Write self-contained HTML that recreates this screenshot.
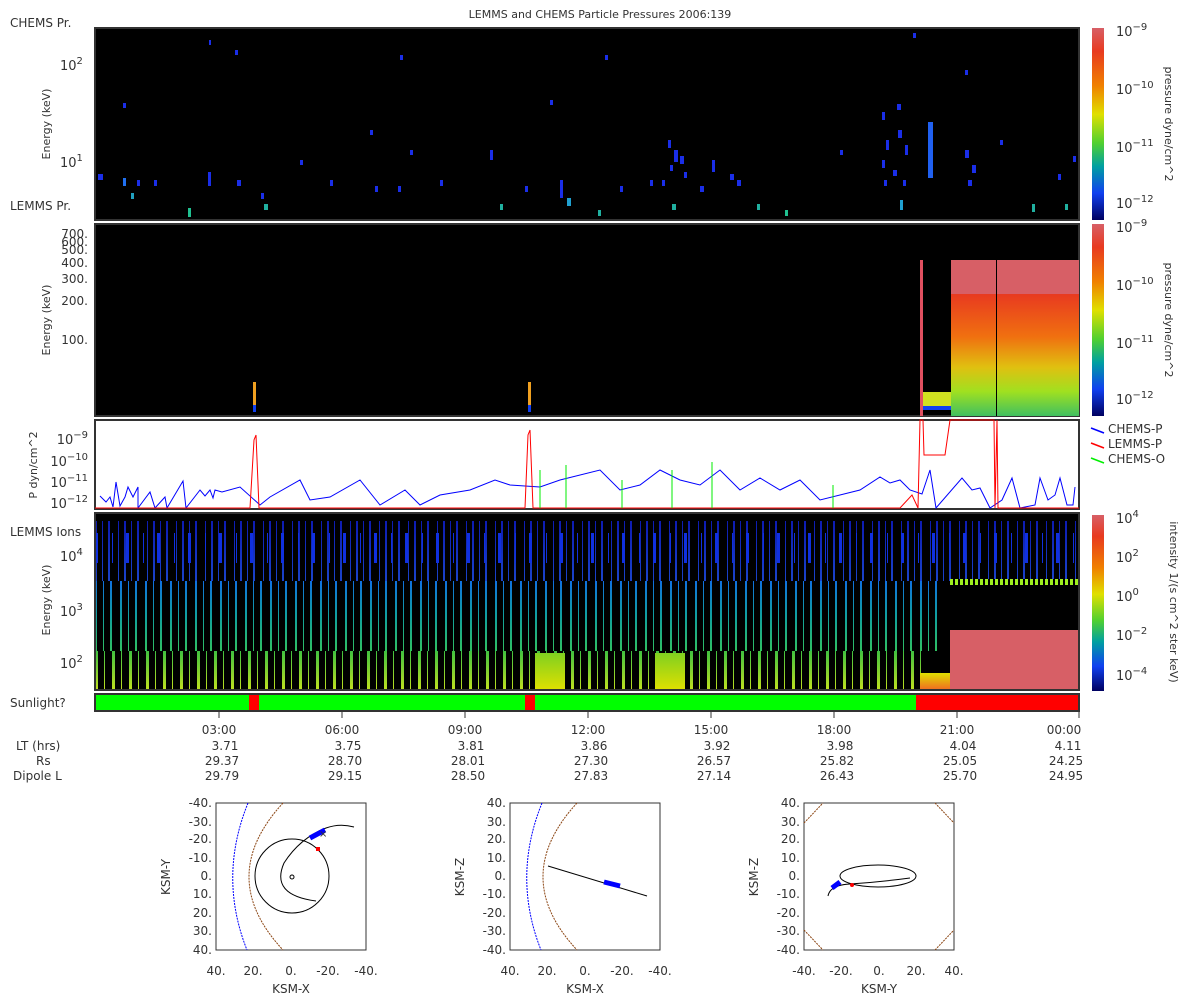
<!DOCTYPE html>
<html><head><meta charset="utf-8"><style>
body{margin:0;background:#fff;width:1200px;height:1000px;overflow:hidden;font-family:"DejaVu Sans","Liberation Sans",sans-serif;color:#333}
svg{position:absolute;left:0;top:0}
text{font-family:"DejaVu Sans","Liberation Sans",sans-serif;fill:#333}
.p4{position:absolute;left:95px;top:513px;width:984px;height:177px;background:#000;overflow:hidden}
.p4 div{position:absolute;left:0;width:100%}
</style></head><body>
<div class="p4">
<div style="top:8px;height:60px;background:linear-gradient(#1020d0,#2050f0);-webkit-mask:repeating-linear-gradient(90deg,#000 0 2px,transparent 2px 7px,#000 7px 8px,transparent 8px 13px,#000 13px 15px,transparent 15px 23px,#000 23px 24px,transparent 24px 29px);opacity:.85"></div>
<div style="top:20px;height:30px;background:#1030e0;-webkit-mask:repeating-linear-gradient(90deg,#000 0 3px,transparent 3px 17px,#000 17px 18px,transparent 18px 31px)"></div>
<div style="top:68px;height:70px;background:linear-gradient(#1070e0,#10a0a0,#30c060);-webkit-mask:repeating-linear-gradient(90deg,#000 0 2px,transparent 2px 8px,#000 8px 9px,transparent 9px 15px,#000 15px 17px,transparent 17px 25px);width:845px"></div>
<div style="top:138px;height:39px;background:linear-gradient(#40c040,#c0e020);-webkit-mask:repeating-linear-gradient(90deg,#000 0 3px,transparent 3px 9px,#000 9px 10px,transparent 10px 17px);width:830px"></div>
<div style="left:440px;top:140px;height:37px;width:30px;background:linear-gradient(#80d020,#e0e000)"></div>
<div style="left:560px;top:140px;height:37px;width:30px;background:linear-gradient(#80d020,#e0e000)"></div>
<div style="left:855px;top:66px;height:6px;width:129px;background:repeating-linear-gradient(90deg,#a0f020 0 3px,#000 3px 5px)"></div>
<div style="left:855px;top:117px;height:60px;width:129px;background:#d75f66"></div>
<div style="left:825px;top:160px;height:16px;width:30px;background:linear-gradient(#e0e000,#f07020)"></div>
</div>
<svg width="1200" height="1000" viewBox="0 0 1200 1000">
<defs>
<linearGradient id="cb" x1="0" y1="0" x2="0" y2="1">
<stop offset="0" stop-color="#d75f66"/><stop offset=".12" stop-color="#e83a20"/><stop offset=".3" stop-color="#f08000"/><stop offset=".45" stop-color="#e0e000"/><stop offset=".6" stop-color="#50d030"/><stop offset=".72" stop-color="#00a0a0"/><stop offset=".86" stop-color="#1040f0"/><stop offset="1" stop-color="#000060"/></linearGradient>
<linearGradient id="p2g" x1="0" y1="0" x2="0" y2="1">
<stop offset="0" stop-color="#e83a20"/><stop offset=".35" stop-color="#f07010"/><stop offset=".6" stop-color="#e0c010"/><stop offset=".8" stop-color="#a0e020"/><stop offset="1" stop-color="#40c060"/></linearGradient>
</defs>
<text x="600" y="18" font-size="11" text-anchor="middle">LEMMS and CHEMS Particle Pressures  2006:139</text>
<rect x="95" y="28" width="984" height="192" fill="#000" stroke="#333" stroke-width="2"/>
<g fill="#1a2ee8">
<rect x="98" y="174" width="5" height="6"/><rect x="123" y="178" width="3" height="8" fill="#2070f0"/><rect x="137" y="180" width="3" height="6"/><rect x="131" y="193" width="3" height="6" fill="#20a0c0"/><rect x="154" y="180" width="3" height="6"/><rect x="188" y="208" width="3" height="9" fill="#20c090"/><rect x="208" y="172" width="3" height="14"/><rect x="237" y="180" width="4" height="6"/><rect x="261" y="193" width="3" height="6"/><rect x="264" y="204" width="4" height="6" fill="#20b0a0"/><rect x="330" y="180" width="3" height="6"/><rect x="375" y="186" width="3" height="6"/><rect x="398" y="186" width="3" height="6"/><rect x="440" y="180" width="3" height="6"/><rect x="500" y="204" width="3" height="6" fill="#20b0a0"/><rect x="525" y="186" width="3" height="6"/><rect x="560" y="180" width="3" height="18"/><rect x="567" y="198" width="4" height="8" fill="#20a0d0"/><rect x="598" y="210" width="3" height="6" fill="#20b0a0"/><rect x="620" y="186" width="3" height="6"/><rect x="650" y="180" width="3" height="6"/>
<rect x="668" y="140" width="3" height="8"/><rect x="674" y="150" width="4" height="12"/><rect x="680" y="156" width="4" height="8"/><rect x="670" y="165" width="3" height="6"/><rect x="684" y="172" width="3" height="6"/><rect x="662" y="180" width="3" height="6"/><rect x="672" y="204" width="4" height="6" fill="#20b0a0"/><rect x="700" y="186" width="4" height="6"/><rect x="712" y="160" width="3" height="12"/><rect x="730" y="174" width="4" height="6"/><rect x="737" y="180" width="4" height="6"/><rect x="757" y="204" width="3" height="6" fill="#20b0a0"/><rect x="785" y="210" width="3" height="6" fill="#20c090"/>
<rect x="882" y="112" width="3" height="8"/><rect x="897" y="104" width="4" height="6"/><rect x="886" y="140" width="3" height="10"/><rect x="898" y="130" width="4" height="8"/><rect x="905" y="145" width="3" height="10"/><rect x="882" y="160" width="3" height="8"/><rect x="893" y="170" width="4" height="6"/><rect x="884" y="180" width="3" height="6"/><rect x="903" y="180" width="3" height="6"/><rect x="900" y="200" width="3" height="10" fill="#20a0d0"/><rect x="928" y="122" width="5" height="56" fill="#2060f0"/><rect x="965" y="150" width="4" height="8"/><rect x="972" y="165" width="4" height="8"/><rect x="968" y="180" width="4" height="6"/><rect x="1032" y="204" width="3" height="8" fill="#20b0a0"/><rect x="1058" y="174" width="3" height="6"/><rect x="1065" y="204" width="3" height="6" fill="#20b0a0"/><rect x="1073" y="156" width="3" height="6"/>
<rect x="209" y="40" width="2" height="5"/><rect x="235" y="50" width="3" height="5"/><rect x="123" y="103" width="3" height="5"/><rect x="400" y="55" width="3" height="5"/><rect x="605" y="55" width="3" height="5"/><rect x="913" y="33" width="3" height="5"/><rect x="965" y="70" width="3" height="5"/><rect x="550" y="100" width="3" height="5"/><rect x="370" y="130" width="3" height="5"/><rect x="490" y="150" width="3" height="10"/><rect x="410" y="150" width="3" height="5"/><rect x="300" y="160" width="3" height="5"/><rect x="1000" y="140" width="3" height="5"/><rect x="840" y="150" width="3" height="5"/>
</g>
<text x="10" y="27" font-size="12">CHEMS Pr.</text>
<text x="10" y="210" font-size="12">LEMMS Pr.</text>
<text x="60" y="70" font-size="13">10<tspan dy="-6" font-size="10">2</tspan></text>
<text x="60" y="167" font-size="13">10<tspan dy="-6" font-size="10">1</tspan></text>
<text transform="translate(50,124) rotate(-90)" font-size="11" text-anchor="middle">Energy (keV)</text>
<rect x="1092" y="28" width="12" height="192" fill="url(#cb)"/>
<text x="1116" y="36" font-size="13">10<tspan dy="-6" font-size="10">−9</tspan></text>
<text x="1116" y="94" font-size="13">10<tspan dy="-6" font-size="10">−10</tspan></text>
<text x="1116" y="152" font-size="13">10<tspan dy="-6" font-size="10">−11</tspan></text>
<text x="1116" y="208" font-size="13">10<tspan dy="-6" font-size="10">−12</tspan></text>
<text transform="translate(1165,124) rotate(90)" font-size="11" text-anchor="middle">pressure dyne/cm^2</text>
<rect x="95" y="224" width="984" height="192" fill="#000" stroke="#333" stroke-width="2"/>
<rect x="253" y="382" width="3" height="30" fill="#f0a020"/><rect x="253" y="405" width="3" height="7" fill="#1040f0"/>
<rect x="528" y="382" width="3" height="30" fill="#f0a020"/><rect x="528" y="405" width="3" height="7" fill="#1040f0"/>
<rect x="920" y="260" width="3" height="156" fill="#e05060"/>
<rect x="923" y="392" width="28" height="14" fill="#d0e020"/><rect x="923" y="406" width="28" height="4" fill="#1040f0"/>
<rect x="951" y="260" width="128" height="34" fill="#d75f66"/>
<rect x="951" y="294" width="128" height="122" fill="url(#p2g)"/>
<rect x="996" y="260" width="1" height="156" fill="#000"/>
<g font-size="12" text-anchor="end"><text x="88" y="238">700.</text><text x="88" y="246">600.</text><text x="88" y="254">500.</text><text x="88" y="267">400.</text><text x="88" y="283">300.</text><text x="88" y="305">200.</text><text x="88" y="344">100.</text></g>
<text transform="translate(50,320) rotate(-90)" font-size="11" text-anchor="middle">Energy (keV)</text>
<rect x="1092" y="224" width="12" height="192" fill="url(#cb)"/>
<text x="1116" y="232" font-size="13">10<tspan dy="-6" font-size="10">−9</tspan></text>
<text x="1116" y="290" font-size="13">10<tspan dy="-6" font-size="10">−10</tspan></text>
<text x="1116" y="348" font-size="13">10<tspan dy="-6" font-size="10">−11</tspan></text>
<text x="1116" y="404" font-size="13">10<tspan dy="-6" font-size="10">−12</tspan></text>
<text transform="translate(1165,320) rotate(90)" font-size="11" text-anchor="middle">pressure dyne/cm^2</text>
<rect x="95" y="420" width="984" height="89" fill="#fff" stroke="#333" stroke-width="2"/>
<polyline fill="none" stroke="#00f" stroke-width="1" points="100,496 106,502 110,497 113,507 116,482 120,506 125,497 128,487 133,497 138,487 138,508 150,492 155,508 165,497 167,508 183,481 186,508 200,490 205,496 210,490 213,498 215,490 222,492 240,487 260,505 270,497 300,480 310,500 330,497 360,480 380,505 405,490 420,505 440,495 470,490 495,480 510,485 540,487 560,480 600,470 620,490 640,485 660,470 680,480 700,485 720,470 740,490 760,478 780,490 800,480 820,500 860,490 880,477 890,483 900,480 910,490 922,494 930,470 936,508 962,478 972,490 980,488 990,508 1002,500 1012,478 1020,508 1035,505 1040,478 1048,500 1055,495 1060,478 1067,505 1073,505 1075,487"/>
<polyline fill="none" stroke="#f00" stroke-width="1" points="95,508 250,508 254,440 256,435 259,508 525,508 528,435 530,430 533,508 900,508 912,495 918,508 920,420 923,420 924,455 930,455 945,455 950,420 951,420 994,420 995,508 997,420 998,508 1079,508"/>
<g stroke="#0e0"><line x1="540" y1="470" x2="540" y2="508"/><line x1="566" y1="465" x2="566" y2="508"/><line x1="622" y1="480" x2="622" y2="508"/><line x1="672" y1="470" x2="672" y2="508"/><line x1="712" y1="462" x2="712" y2="508"/><line x1="833" y1="485" x2="833" y2="508"/></g>
<text x="88" y="444" font-size="13" text-anchor="end">10<tspan dy="-6" font-size="10">−9</tspan></text>
<text x="88" y="466" font-size="13" text-anchor="end">10<tspan dy="-6" font-size="10">−10</tspan></text>
<text x="88" y="487" font-size="13" text-anchor="end">10<tspan dy="-6" font-size="10">−11</tspan></text>
<text x="88" y="508" font-size="13" text-anchor="end">10<tspan dy="-6" font-size="10">−12</tspan></text>
<text transform="translate(37,465) rotate(-90)" font-size="11" text-anchor="middle">P dyn/cm^2</text>
<g font-size="12"><line x1="1091" y1="428" x2="1104" y2="433" stroke="#00f" stroke-width="1.5"/><text x="1108" y="433">CHEMS-P</text>
<line x1="1091" y1="443" x2="1104" y2="448" stroke="#f00" stroke-width="1.5"/><text x="1108" y="448">LEMMS-P</text>
<line x1="1091" y1="458" x2="1104" y2="463" stroke="#0e0" stroke-width="1.5"/><text x="1108" y="463">CHEMS-O</text></g>
<rect x="95" y="513" width="984" height="177" fill="none" stroke="#333" stroke-width="2"/>
<text x="10" y="536" font-size="12">LEMMS Ions</text>
<text x="60" y="561" font-size="13">10<tspan dy="-6" font-size="10">4</tspan></text>
<text x="60" y="616" font-size="13">10<tspan dy="-6" font-size="10">3</tspan></text>
<text x="60" y="668" font-size="13">10<tspan dy="-6" font-size="10">2</tspan></text>
<text transform="translate(50,600) rotate(-90)" font-size="11" text-anchor="middle">Energy (keV)</text>
<rect x="1092" y="515" width="12" height="176" fill="url(#cb)"/>
<text x="1116" y="523" font-size="13">10<tspan dy="-6" font-size="10">4</tspan></text>
<text x="1116" y="562" font-size="13">10<tspan dy="-6" font-size="10">2</tspan></text>
<text x="1116" y="601" font-size="13">10<tspan dy="-6" font-size="10">0</tspan></text>
<text x="1116" y="640" font-size="13">10<tspan dy="-6" font-size="10">−2</tspan></text>
<text x="1116" y="680" font-size="13">10<tspan dy="-6" font-size="10">−4</tspan></text>
<text transform="translate(1170,602) rotate(90)" font-size="11" text-anchor="middle">intensity 1/(s cm^2 ster keV)</text>
<rect x="96" y="695" width="153" height="16" fill="#0f0"/><rect x="249" y="695" width="10" height="16" fill="#f00"/><rect x="259" y="695" width="266" height="16" fill="#0f0"/><rect x="525" y="695" width="10" height="16" fill="#f00"/><rect x="535" y="695" width="381" height="16" fill="#0f0"/><rect x="916" y="695" width="163" height="16" fill="#f00"/>
<rect x="95" y="694" width="984" height="17" fill="none" stroke="#333" stroke-width="2"/>
<text x="10" y="707" font-size="12">Sunlight?</text>
<g stroke="#333"><line x1="219" y1="711" x2="219" y2="718"/><line x1="342" y1="711" x2="342" y2="718"/><line x1="465" y1="711" x2="465" y2="718"/><line x1="588" y1="711" x2="588" y2="718"/><line x1="711" y1="711" x2="711" y2="718"/><line x1="834" y1="711" x2="834" y2="718"/><line x1="957" y1="711" x2="957" y2="718"/><line x1="1079" y1="711" x2="1079" y2="718"/></g>
<g font-size="12" text-anchor="middle">
<text x="219" y="734">03:00</text><text x="342" y="734">06:00</text><text x="465" y="734">09:00</text><text x="588" y="734">12:00</text><text x="711" y="734">15:00</text><text x="834" y="734">18:00</text><text x="957" y="734">21:00</text><text x="1064" y="734">00:00</text>
<text x="225" y="750">3.71</text><text x="348" y="750">3.75</text><text x="471" y="750">3.81</text><text x="594" y="750">3.86</text><text x="717" y="750">3.92</text><text x="840" y="750">3.98</text><text x="963" y="750">4.04</text><text x="1068" y="750">4.11</text>
<text x="222" y="765">29.37</text><text x="345" y="765">28.70</text><text x="468" y="765">28.01</text><text x="591" y="765">27.30</text><text x="714" y="765">26.57</text><text x="837" y="765">25.82</text><text x="960" y="765">25.05</text><text x="1066" y="765">24.25</text>
<text x="222" y="780">29.79</text><text x="345" y="780">29.15</text><text x="468" y="780">28.50</text><text x="591" y="780">27.83</text><text x="714" y="780">27.14</text><text x="837" y="780">26.43</text><text x="960" y="780">25.70</text><text x="1066" y="780">24.95</text>
</g>
<g font-size="12"><text x="16" y="750">LT (hrs)</text><text x="36" y="765">Rs</text><text x="13" y="780">Dipole L</text></g>
<g font-size="12" text-anchor="end">
<g><text x="212" y="807">-40.</text><text x="212" y="826">-30.</text><text x="212" y="843">-20.</text><text x="212" y="862">-10.</text><text x="212" y="880">0.</text><text x="212" y="898">10.</text><text x="212" y="917">20.</text><text x="212" y="935">30.</text><text x="212" y="954">40.</text></g>
<g transform="translate(294,0)"><text x="212" y="807">40.</text><text x="212" y="826">30.</text><text x="212" y="843">20.</text><text x="212" y="862">10.</text><text x="212" y="880">0.</text><text x="212" y="898">-10.</text><text x="212" y="917">-20.</text><text x="212" y="935">-30.</text><text x="212" y="954">-40.</text></g>
<g transform="translate(588,0)"><text x="212" y="807">40.</text><text x="212" y="826">30.</text><text x="212" y="843">20.</text><text x="212" y="862">10.</text><text x="212" y="880">0.</text><text x="212" y="898">-10.</text><text x="212" y="917">-20.</text><text x="212" y="935">-30.</text><text x="212" y="954">-40.</text></g>
</g>
<g font-size="12" text-anchor="middle">
<text x="216" y="975">40.</text><text x="253" y="975">20.</text><text x="291" y="975">0.</text><text x="328" y="975">-20.</text><text x="366" y="975">-40.</text><text x="291" y="993">KSM-X</text>
<text x="510" y="975">40.</text><text x="547" y="975">20.</text><text x="585" y="975">0.</text><text x="622" y="975">-20.</text><text x="660" y="975">-40.</text><text x="585" y="993">KSM-X</text>
<text x="804" y="975">-40.</text><text x="841" y="975">-20.</text><text x="879" y="975">0.</text><text x="916" y="975">20.</text><text x="954" y="975">40.</text><text x="879" y="993">KSM-Y</text>
<text transform="translate(170,877) rotate(-90)">KSM-Y</text><text transform="translate(464,877) rotate(-90)">KSM-Z</text><text transform="translate(758,877) rotate(-90)">KSM-Z</text>
</g>
<g fill="none" stroke="#333" stroke-width="1">
<rect x="216" y="803" width="150" height="147"/><rect x="510" y="803" width="150" height="147"/><rect x="804" y="803" width="150" height="147"/>
</g>
<g fill="none" stroke-width="1">
<path d="M248,803 Q218,877 247,950" stroke="#00f" stroke-dasharray="2,1"/>
<path d="M283,803 Q215,877 283,950" stroke="#8b4513" stroke-dasharray="2,1"/>
<circle cx="292" cy="876" r="37" stroke="#000"/><circle cx="292" cy="877" r="2" stroke="#000"/>
<path d="M316,901 Q270,895 284,863 Q300,838 326,828 Q340,823 354,827" stroke="#000"/>
<path d="M542,803 Q512,877 541,950" stroke="#00f" stroke-dasharray="2,1"/>
<path d="M577,803 Q509,877 577,950" stroke="#8b4513" stroke-dasharray="2,1"/>
<path d="M548,866 L647,896" stroke="#000"/>
<path d="M804,823 L823,803 M935,803 L954,823 M804,930 L823,950 M935,950 L954,930" stroke="#8b4513" stroke-dasharray="2,1"/>
<ellipse cx="878" cy="876" rx="38" ry="11" stroke="#000"/>
<path d="M828,896 Q830,885 850,884 Q880,882 910,878" stroke="#000"/>
</g>
<path d="M310,838 L325,830" stroke="#00f" stroke-width="5"/><text x="319" y="837" fill="#f00" font-size="10">×</text><rect x="316" y="847" width="4" height="4" fill="#f00"/>
<path d="M604,882 L620,886" stroke="#00f" stroke-width="5"/><circle cx="852" cy="885" r="2" fill="#f00"/><path d="M832,888 L840,882" stroke="#00f" stroke-width="5"/>
</svg>
</body></html>
